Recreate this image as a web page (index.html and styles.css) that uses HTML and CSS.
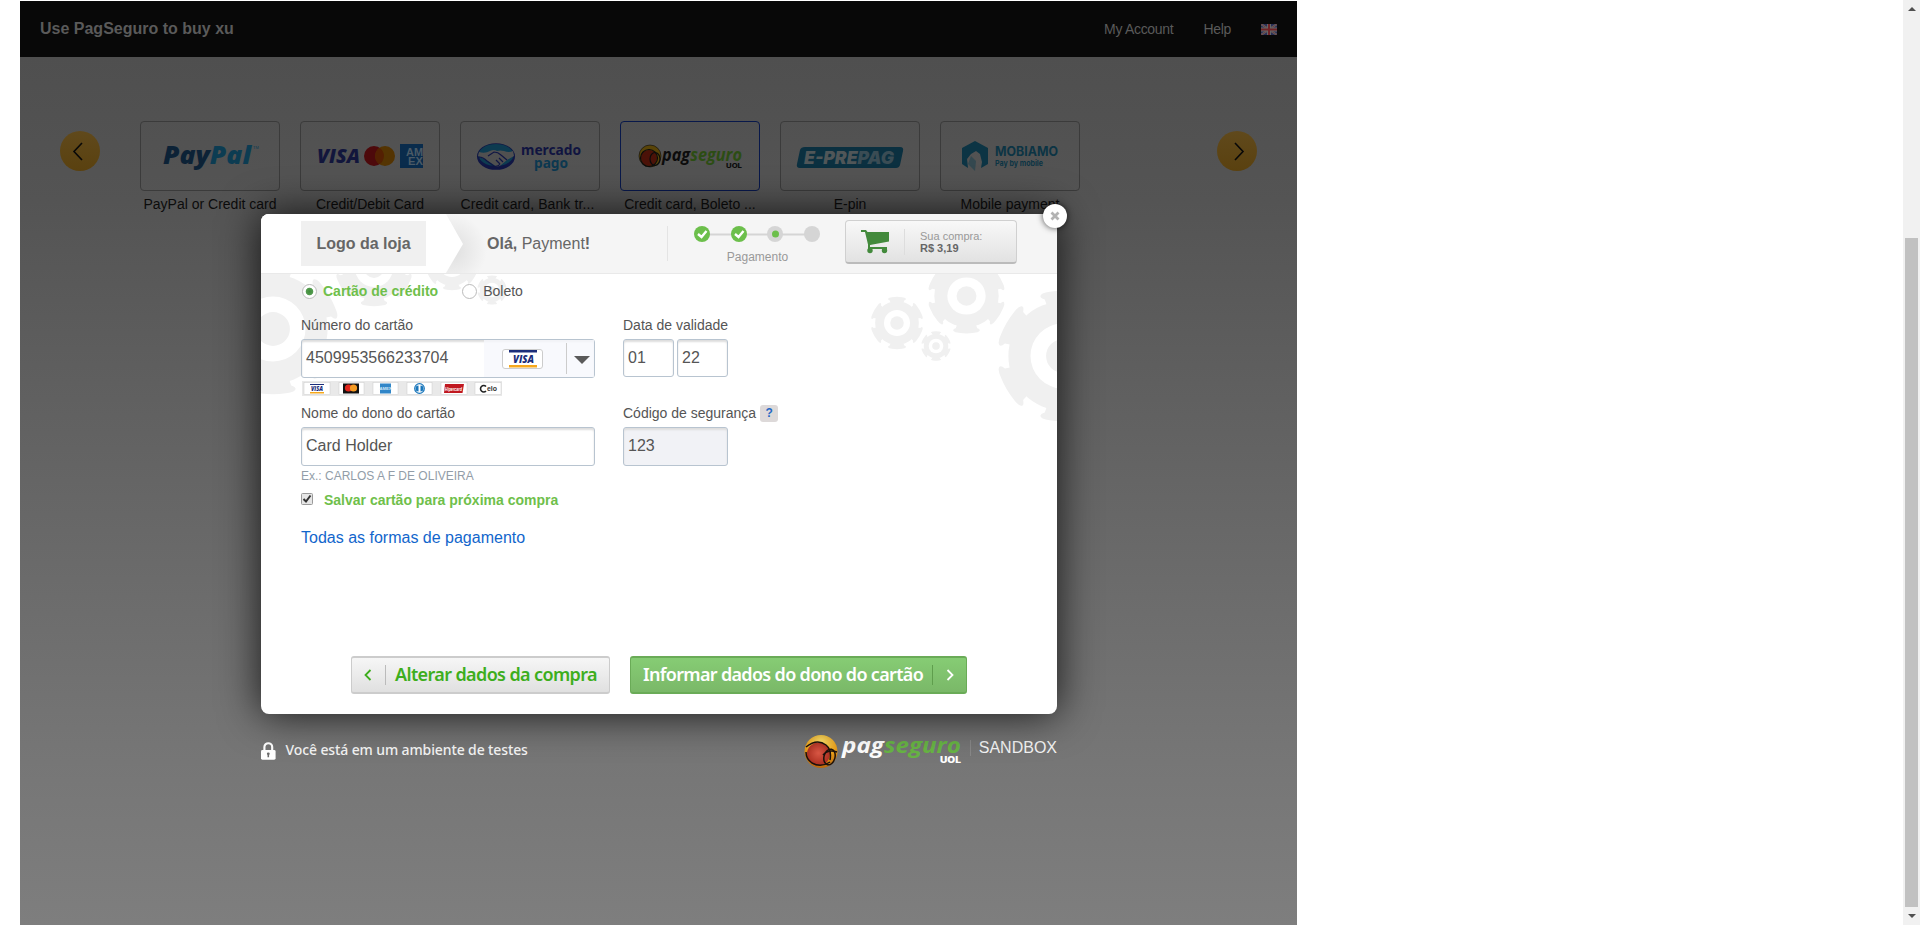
FILE: index.html
```html
<!DOCTYPE html>
<html lang="pt-BR">
<head>
<meta charset="utf-8">
<title>PagSeguro</title>
<link rel="stylesheet" href="styles.css">
</head>
<body>
<svg class="defs" width="0" height="0" aria-hidden="true">
  <defs>
    <path id="tooth" d="M-25-78L-28-87Q-37-90-34-94Q-31-98-20-99Q0-102 20-99Q31-98 34-94Q37-90 28-87L25-78Z"/>
    <g id="gear">
      <circle r="84" fill="#f0f0f0"/>
      <g fill="#f0f0f0">
        <use href="#tooth"/><use href="#tooth" transform="rotate(60)"/><use href="#tooth" transform="rotate(120)"/>
        <use href="#tooth" transform="rotate(180)"/><use href="#tooth" transform="rotate(240)"/><use href="#tooth" transform="rotate(300)"/>
      </g>
      <circle r="50" fill="#fff"/>
      <circle r="26" fill="#f0f0f0"/>
    </g>
    <radialGradient id="gold" cx=".5" cy=".2" r=".8"><stop offset="0" stop-color="#ffe36a"/><stop offset=".6" stop-color="#eda21c"/><stop offset="1" stop-color="#b8660c"/></radialGradient>
    <radialGradient id="red" cx=".5" cy=".45" r=".6"><stop offset="0" stop-color="#dc5845"/><stop offset="1" stop-color="#a52a1c"/></radialGradient>
  </defs>
</svg>
<main class="stage">
  <header class="topbar">
    <h1 class="topbar-title">Use PagSeguro to buy xu</h1>
    <nav class="topbar-nav">
      <span>My Account</span><span>Help</span>
      <svg class="flag" viewBox="0 0 16 11"><rect width="16" height="11" fill="#282d55"/><path d="M0 0L16 11M16 0L0 11" stroke="#666" stroke-width="2"/><path d="M0 0L16 11M16 0L0 11" stroke="#6a3438" stroke-width=".8"/><path d="M8 0V11M0 5.500H16" stroke="#666" stroke-width="4"/><path d="M8 0V11M0 5.500H16" stroke="#702226" stroke-width="2"/></svg>
    </nav>
  </header>

  <section class="carousel">
    <div class="arrow"><svg viewBox="0 0 40 40"><path d="M22 12L14 20.500L22 29"/></svg></div>
    <ul class="methods">
      <li class="method"><div class="tile"><svg viewBox="0 0 140 70">
        <text x="23" y="43" textLength="88" lengthAdjust="spacingAndGlyphs" font-family="Open Sans" font-weight="800" font-style="italic" font-size="25" fill="#0c2236">Pay<tspan fill="#0c3c52">Pal</tspan></text>
        <text x="113" y="28" font-family="Liberation Sans" font-size="4" fill="#0c3c52">TM</text></svg></div><p>PayPal or Credit card</p></li>
      <li class="method"><div class="tile"><svg viewBox="0 0 140 70">
        <text x="17" y="42" font-family="Open Sans" font-weight="800" font-style="italic" font-size="19" textLength="43" lengthAdjust="spacingAndGlyphs" fill="#12163c">VISA</text>
        <circle cx="74" cy="35" r="10" fill="#4d090b"/><circle cx="85" cy="35" r="10" fill="#543402"/><path d="M79.500 26.700a10 10 0 0 1 0 16.600a10 10 0 0 1 0-16.600" fill="#542002"/>
        <rect x="100" y="23" width="23" height="24" fill="#0a2c4c"/><g font-family="Liberation Sans" font-weight="700" font-size="10" fill="#4a5a66"><text x="106" y="34.500" textLength="17" lengthAdjust="spacingAndGlyphs">AM</text><text x="108" y="44" textLength="15" lengthAdjust="spacingAndGlyphs">EX</text></g></svg></div><p>Credit/Debit Card</p></li>
      <li class="method"><div class="tile"><svg viewBox="0 0 140 70">
        <ellipse cx="36" cy="35.500" rx="19" ry="13.300" fill="#101644"/><ellipse cx="36" cy="34" rx="17.500" ry="11" fill="#0d3b50"/>
        <path d="M19 31q6 2 11-1q4-2 7 0q3-1 7 0q5 2 9 0l1 5-7 4-6 5q-4 3-7 0l-8-5-8-4z" fill="#505050"/><path d="M19 36q4 0 8 4l7 5q4 1 6-2M28 35l6-4q4 0 7 3l6 5M36 39l4 4M39 37l4 4" fill="none" stroke="#101644" stroke-width="1.200"/>
        <g font-family="Noto Sans" font-weight="700" font-size="14.500"><text x="61" y="34" textLength="60" lengthAdjust="spacingAndGlyphs" fill="#101440">mercado</text><text x="74" y="46.500" textLength="34" lengthAdjust="spacingAndGlyphs" fill="#0c3850">pago</text></g></svg></div><p class="tight">Credit card, Bank tr...</p></li>
      <li class="method"><div class="tile selected"><svg viewBox="0 0 140 70">
        <circle cx="30" cy="35" r="11" fill="#594408"/><circle cx="29" cy="37" r="8" fill="#4b1208"/><g fill="none" stroke="#0c0c0c" stroke-width="1.200"><circle cx="29" cy="37" r="8.500"/><ellipse cx="35" cy="38" rx="5" ry="6.500"/><circle cx="30" cy="35" r="11" stroke-width=".6"/></g>
        <text x="42" y="40" textLength="80" lengthAdjust="spacingAndGlyphs" font-family="Open Sans" font-weight="700" font-style="italic" font-size="17" fill="#0c0c0c">pag<tspan fill="#2c4d14">seguro</tspan></text>
        <text x="106" y="47" font-family="Inter" font-weight="800" font-size="6.500" textLength="16" lengthAdjust="spacingAndGlyphs" fill="#0c0c0c">UOL</text></svg></div><p>Credit card, Boleto ...</p></li>
      <li class="method"><div class="tile"><svg viewBox="0 0 140 70">
        <path d="M25 26H120q4 0 3 4l-3 14q-1 3-4 3H20q-4 0-3-4l3-14q1-3 5-3z" fill="#0b3040"/>
        <text x="24" y="43" textLength="90" lengthAdjust="spacingAndGlyphs" font-family="Inter" font-weight="900" font-style="italic" font-size="17.500" fill="#505658">E-PRE<tspan fill="#3a4c54">PAG</tspan></text></svg></div><p>E-pin</p></li>
      <li class="method"><div class="tile"><svg viewBox="0 0 140 70">
        <path d="M35 20L48 27V43L41 47L42 41L40 33L36 30L31 33L27 38L28 47L22 43V27Z" fill="#0c3444"/><path d="M28 43l3-8 5 5-1 10z" fill="#34484f"/>
        <g font-family="Inter" font-weight="700" fill="#0c3444"><text x="55" y="35" font-size="12.500" textLength="63" lengthAdjust="spacingAndGlyphs">MOBIAMO</text><text x="55" y="44.500" font-size="8" textLength="48" lengthAdjust="spacingAndGlyphs">Pay by mobile</text></g></svg></div><p>Mobile payment</p></li>
    </ul>
    <div class="arrow"><svg viewBox="0 0 40 40"><path d="M18 12L26 20.500L18 29"/></svg></div>
  </section>

  <div class="lightbox">
    <section class="modal">
      <svg class="gears" width="796" height="441" viewBox="261 273 796 441">
        <use href="#gear" transform="translate(273 329) scale(.65)"/><use href="#gear" transform="translate(374 268) scale(.38)"/><use href="#gear" transform="translate(452 264) scale(.26)"/><use href="#gear" transform="translate(492 290) scale(.145)"/>
        <use href="#gear" transform="translate(897 323) scale(.26)"/><use href="#gear" transform="translate(966.500 296) scale(.383 .372)"/><use href="#gear" transform="translate(936 346) scale(.146)"/><use href="#gear" transform="translate(1063 356) scale(.65)"/>
      </svg>
      <header class="modal-head">
        <svg class="wedge" width="300" height="59" viewBox="0 0 300 59"><defs><radialGradient id="fade" gradientUnits="userSpaceOnUse" cx="190" cy="36" r="36"><stop offset="0" stop-color="#dedede"/><stop offset="1" stop-color="#f5f5f5"/></radialGradient></defs><path d="M185 0H300V59H185Z" fill="url(#fade)"/><path d="M0 0H185L202 30L185 59H0Z" fill="#fff"/></svg>
        <div class="store">Logo da loja</div>
        <div class="hello"><b>Olá,</b> Payment<b>!</b></div>
        <div class="progress">
          <svg width="126" height="16" viewBox="0 0 126 16"><path d="M8 8.500H118" stroke="#d5d5d5" stroke-width="2"/><circle cx="8" cy="8" r="8" fill="#6cbf4b"/><circle cx="45" cy="8" r="8" fill="#6cbf4b"/><circle cx="81" cy="8" r="8" fill="#d5d5d5"/><circle cx="118" cy="8" r="8" fill="#d5d5d5"/><circle cx="81.500" cy="8" r="3.500" fill="#6cbf4b"/><path d="M4 8L7.500 11L12.500 5M41 8L44.500 11L49.500 5" fill="none" stroke="#fff" stroke-width="2.400"/></svg>
          <span>Pagamento</span>
        </div>
        <div class="cart">
          <svg width="28" height="25" viewBox="0 0 28 25" fill="#438a3c"><path d="M0 1H5L6.500 3H28V12.500L9 16V18H26V20H7V15.500L4 3H0Z"/><circle cx="9" cy="21.500" r="2.700"/><circle cx="23.500" cy="21.500" r="2.700"/></svg>
          <p>Sua compra:<br><b>R$ 3,19</b></p>
        </div>
      </header>

      <form class="form">
        <div class="types">
          <i class="radio on"></i><strong>Cartão de crédito</strong><i class="radio second"></i><span>Boleto</span>
        </div>
        <div class="row">
          <div class="col wide">
            <label>Número do cartão</label>
            <div class="input number"><span>4509953566233704</span>
              <div class="brand">
                <svg class="visa" width="41" height="20" viewBox="0 0 41 20"><rect x=".5" y=".5" width="40" height="19" rx="2.500" fill="#fff" stroke="#ccc"/><path d="M7 1H35V3.500H7Z" fill="#1b2d7a"/><path d="M7 16H35V18.500H7Z" fill="#f6a81c"/><text x="11" y="13.500" font-family="Open Sans" font-weight="800" font-style="italic" font-size="11" textLength="21" lengthAdjust="spacingAndGlyphs" fill="#1b2d7a">VISA</text></svg>
                <i class="caret"></i>
              </div>
            </div>
            <svg class="flags" width="200" height="15" viewBox="0 0 200 15"><rect width="200" height="15" fill="#e9e9e9"/>
              <g fill="#fff" stroke="#ccc" stroke-width=".5"><rect x="2" y="1.500" width="26" height="12"/><rect x="37" y="1.500" width="25" height="12"/><rect x="71" y="1.500" width="25" height="12"/><rect x="105" y="1.500" width="25" height="12"/><rect x="139" y="1.500" width="26" height="12"/><rect x="173" y="1.500" width="26" height="12"/></g>
              <path d="M8 3H22V4H8Z" fill="#1b2d7a"/><path d="M8 11H22V12.500H8Z" fill="#f6a81c"/><text x="9" y="10" font-family="Open Sans" font-weight="800" font-style="italic" font-size="6.500" textLength="12" lengthAdjust="spacingAndGlyphs" fill="#1b2d7a">VISA</text>
              <rect x="41" y="2.500" width="16" height="10" fill="#111"/><circle cx="46.500" cy="7" r="3.600" fill="#e1251b"/><circle cx="51.500" cy="7" r="3.600" fill="#f59a22"/>
              <rect x="78" y="2.500" width="11" height="10" fill="#3186c8"/><text x="77.500" y="9" font-family="Liberation Sans" font-weight="700" font-size="4" fill="#d4e8f6" textLength="12" lengthAdjust="spacingAndGlyphs">AMEX</text>
              <circle cx="117.500" cy="7.500" r="4.800" fill="#fff" stroke="#1976bb" stroke-width="1.200"/><path d="M116.500 4.500a3 3 0 0 0 0 6zM118.500 4.500a3 3 0 0 1 0 6z" fill="#1976bb"/>
              <path d="M143 3H162L160.500 12H142Z" fill="#c01820"/><text x="143" y="9.500" font-family="Liberation Sans" font-weight="700" font-style="italic" font-size="5" textLength="17" lengthAdjust="spacingAndGlyphs" fill="#fff">Hipercard</text>
              <path d="M184 5.500a3.200 3.200 0 1 0 0 4.500" fill="none" stroke="#222" stroke-width="1.600"/><text x="185" y="10" font-family="Liberation Sans" font-weight="700" font-size="8" textLength="10" lengthAdjust="spacingAndGlyphs" fill="#333">elo</text>
            </svg>
          </div>
          <div class="col">
            <label>Data de validade</label>
            <div class="pair"><div class="input short">01</div><div class="input short">22</div></div>
          </div>
        </div>
        <div class="row second-row">
          <div class="col wide">
            <label>Nome do dono do cartão</label>
            <div class="input">Card Holder</div>
            <small>Ex.: CARLOS A F DE OLIVEIRA</small>
          </div>
          <div class="col">
            <label>Código de segurança <span class="help">?</span></label>
            <div class="input cvv">123</div>
          </div>
        </div>
        <div class="save"><svg width="12" height="12" viewBox="0 0 12 12"><rect x=".5" y=".5" width="11" height="11" rx="1" fill="#e6e6e6" stroke="#9a9a9a"/><path d="M2.500 6L5 8.500L9.500 2.500" fill="none" stroke="#333" stroke-width="2"/></svg><strong>Salvar cartão para próxima compra</strong></div>
        <a class="all">Todas as formas de pagamento</a>
      </form>

      <div class="actions">
        <div class="btn back"><svg width="8" height="12" viewBox="0 0 8 12"><path d="M6.500 1L1.500 6L6.500 11"/></svg><i></i><span>Alterar dados da compra</span></div>
        <div class="btn next"><span>Informar dados do dono do cartão</span><i></i><svg width="8" height="12" viewBox="0 0 8 12"><path d="M1.500 1L6.500 6L1.500 11"/></svg></div>
      </div>
      <div class="close"><svg width="10" height="10" viewBox="0 0 10 10"><path d="M1.500 1.500L8.500 8.500M8.500 1.500L1.500 8.500" stroke="#b3b3b3" stroke-width="2.800"/></svg></div>
    </section>

    <footer class="foot">
      <svg class="lock" width="15" height="18" viewBox="0 0 15 18"><path d="M3.500 9V5a4 4 0 0 1 8 0V9" fill="none" stroke="#fff" stroke-width="2.200"/><rect y="8" width="15" height="10" rx="1.500" fill="#fff"/><path d="M6 12a1.500 1.500 0 1 1 3 0L8.300 13V15.500H6.700V13Z" fill="#6c6c6c"/></svg>
      <span class="test">Você está em um ambiente de testes</span>
      <svg class="brandmark" width="158" height="42" viewBox="0 -6 158 42">
        <circle cx="17" cy="17.500" r="16.500" fill="url(#gold)"/><circle cx="14.500" cy="20" r="11.500" fill="url(#red)"/>
        <g fill="none" stroke="#1b120c" stroke-width="1.500"><path d="M2 13Q13 4 22 11Q28 16 26 26M26 28Q17 34 8 29Q2 25 2 18"/><ellipse cx="25.500" cy="23" rx="5.500" ry="8" transform="rotate(15 25.500 23)"/><path d="M19 21Q24 15 33 18"/></g>
        <text x="38" y="19" textLength="119" lengthAdjust="spacingAndGlyphs" font-family="Open Sans" font-weight="700" font-style="italic" font-size="22" fill="#fff">pag<tspan fill="#68b544">seguro</tspan></text>
        <text x="136" y="29" font-family="Inter" font-weight="900" font-size="8.500" textLength="21" lengthAdjust="spacingAndGlyphs" fill="#fff">UOL</text>
      </svg>
      <span class="sandbox">SANDBOX</span>
    </footer>
  </div>
</main>
<aside class="scroll"><i class="up"></i><div class="thumb"></div><i class="down"></i></aside>
</body>
</html>
```
FILE: styles.css
```css
* { box-sizing: border-box; }
body {
  margin: 0;
  height: 925px;
  display: flex;
  justify-content: space-between;
  overflow: hidden;
  background: #fff;
  font-family: "Liberation Sans", Arial, sans-serif;
}
.defs { position: absolute; }
h1, p, ul { margin: 0; padding: 0; }

.stage {
  position: relative;
  width: 1277px;
  height: 924px;
  margin: 1px 0 0 20px;
  overflow: hidden;
  background: linear-gradient(#4e4e4e 0, #4f4f4f 56px, #545454 200px, #767676 760px, #7e7e7e 924px);
}
.topbar {
  height: 56px;
  padding: 0 20px;
  display: flex;
  align-items: center;
  justify-content: space-between;
  background: #080808;
  color: #5a5a5a;
}
.topbar-title { font-size: 16px; letter-spacing: 0; }
.topbar-nav { display: flex; align-items: center; font-size: 14px; letter-spacing: -.3px; }
.topbar-nav span { margin-right: 30px; }
.flag { width: 16px; height: 11px; }

.carousel { display: flex; padding: 64px 40px 0; }
.arrow {
  width: 40px;
  height: 40px;
  margin-top: 10px;
  border-radius: 50%;
  background: linear-gradient(#60491c, #5a410f);
}
.arrow path { fill: none; stroke: #080808; stroke-width: 1.6; }
.methods { display: flex; gap: 20px; margin: 0 137px 0 40px; list-style: none; }
.method { width: 140px; text-align: center; font-size: 14px; line-height: 16px; color: #0c0c0c; white-space: nowrap; }
.tight { margin-left: -5px; letter-spacing: .1px; }
.tile { height: 70px; margin-bottom: 5px; border: 1px solid #3b3b3b; border-radius: 4px; }
.tile svg { display: block; width: 140px; height: 70px; margin: -1px; }
.tile.selected { border-color: #08184a; }

.lightbox { position: absolute; left: 241px; top: 213px; width: 796px; }
.modal {
  position: relative;
  height: 500px;
  border-radius: 8px;
  background: #fff;
  box-shadow: 0 0 40px rgba(0, 0, 0, .8);
  color: #555;
}
.gears { position: absolute; left: 0; top: 59px; }
.modal-head {
  position: relative;
  display: flex;
  height: 60px;
  border-bottom: 1px solid #e9e9e9;
  border-radius: 8px 8px 0 0;
  background: #f5f5f5;
  overflow: hidden;
}
.wedge { position: absolute; left: 0; top: 0; }
.store {
  position: relative;
  width: 125px;
  height: 45px;
  margin: 7px 0 0 40px;
  background: #f0f0f0;
  color: #666;
  font: bold 16px/45px "Liberation Sans", Arial, sans-serif;
  text-align: center;
}
.hello { position: relative; margin: 21px 0 0 61px; width: 180px; color: #666; font-size: 16px; line-height: 18px; }
.progress {
  display: flex;
  flex-direction: column;
  align-items: center;
  height: 35px;
  margin-top: 12px;
  padding: 0 25px 0 26px;
  border-left: 1px solid #e4e4e4;
  font-size: 12px;
  line-height: 14px;
  color: #999;
}
.progress span { margin: 8px 0 0 1px; }
.progress svg { flex: none; }
.cart {
  display: flex;
  width: 172px;
  height: 44px;
  margin-top: 6px;
  padding: 8px 0 0 15px;
  border: 1px solid #d0d0d0;
  border-bottom: 2px solid #bbb;
  border-radius: 4px;
  background: linear-gradient(#f8f8f8, #e2e2e2);
}
.cart p {
  height: 26px;
  margin-left: 15px;
  padding: 1px 0 0 15px;
  border-left: 1px solid #ddd;
  font-size: 11px;
  line-height: 12px;
  color: #999;
}
.cart b { color: #666; font-size: 11px; }

.form { position: relative; padding: 9px 0 0 40px; }
.types { display: flex; align-items: center; height: 16px; margin-bottom: 1px; font-size: 14px; }
.types strong, .save strong { color: #6fbf4b; font-size: 14px; }
.radio { width: 15px; height: 15px; margin: 0 6px 0 1px; border: 1px solid #bbb; border-radius: 50%; background: #fff; }
.radio.second { margin-left: 24px; }
.radio.on { background: radial-gradient(circle, #3f8e3a 0, #559b50 3.4px, #fff 4.2px); }
.row { display: flex; gap: 28px; height: 86px; padding-top: 14px; }
.second-row { height: 105px; padding-top: 16px; }
.wide { width: 294px; }
.row label { display: flex; align-items: center; height: 18px; margin: 2px 0 5px; font-size: 14px; }
.input {
  height: 39px;
  padding: 0 4px;
  border: 1px solid #b8c4d0;
  border-radius: 3px;
  background: #fff;
  box-shadow: inset 0 2px 2px #ddd;
  font-size: 16px;
  line-height: 36px;
}
.number { display: flex; justify-content: space-between; padding-right: 0; }
.brand { display: flex; align-items: center; width: 110px; padding-left: 18px; background: rgba(246, 248, 252, .8); }
.visa { flex: none; }
.caret { display: flex; align-items: center; flex: none; margin-left: 23px; width: 28px; height: 31px; border-left: 1px solid #ccc; }
.caret::after { content: ""; margin: 3px 0 0 7px; border: 8px solid transparent; border-top-color: #5a5a5a; border-bottom: 0; }
.flags { display: block; margin: 3px 0 0 1px; }
.pair { display: flex; gap: 3px; }
.short { width: 51px; height: 38px; }
.cvv { width: 105px; background: #f1f2f6; }
.col small { display: block; margin-top: 3px; font-size: 12px; line-height: 14px; color: #929da8; }
.help {
  margin-left: 4px;
  width: 18px;
  height: 17px;
  border-radius: 3px;
  background: #ddd9d9;
  color: #2468c4;
  font: bold 12px/16px "Liberation Sans", Arial, sans-serif;
  text-align: center;
}
.save { display: flex; align-items: center; gap: 11px; height: 18px; }
.save svg { margin-top: -3px; }
.all { display: block; margin-top: 19px; color: #1266cc; font-size: 16px; line-height: 20px; }

.actions { position: absolute; left: 90px; bottom: 20px; display: flex; gap: 20px; }
.btn {
  display: flex;
  align-items: center;
  height: 38px;
  border-radius: 3px;
  font: 600 18px/32px "Noto Sans", sans-serif;
  white-space: nowrap;
}
.btn i { width: 1px; height: 20px; }
.btn path { fill: none; stroke-width: 1.8; }
.btn svg { flex: none; }
.btn span { padding-bottom: 2px; }
.back { width: 259px; padding-left: 12px; border: 1px solid #ccc; border-width: 2px 1px; background: linear-gradient(#f6f6f6, #e0e0e0); color: #3dae1d; letter-spacing: -.63px; }
.back path { stroke: #3dae1d; }
.back i { margin: 0 9px 0 13px; background: #bbb; }
.next { width: 337px; padding-left: 12px; border: 1px solid #6aab57; border-width: 2px 1px; background: linear-gradient(#86cc74, #7ab868); color: #fff; letter-spacing: -.68px; }
.next path { stroke: #fff; }
.next i { margin: 0 13px 0 9px; background: #5f9e4d; }
.close {
  position: absolute;
  right: -10px;
  top: -10px;
  display: grid;
  place-items: center;
  width: 24px;
  height: 24px;
  border-radius: 50%;
  background: #fff;
  box-shadow: 0 0 6px rgba(0, 0, 0, .7);
}

.foot { display: flex; align-items: flex-start; padding-top: 14px; color: #f4f4f4; }
.lock { margin-top: 14px; }
.test { width: 256px; margin: 12px 270px 0 10px; font: 500 14px/20px "Noto Sans", sans-serif; letter-spacing: -.12px; white-space: nowrap; }
.brandmark { flex: none; margin-left: -1px; }
.sandbox { margin: 12px 0 0 8px; padding-left: 8px; font-size: 16px; line-height: 16px; border-left: 1px solid #888; }

.scroll { display: flex; flex-direction: column; align-items: center; width: 17px; height: 925px; background: #f1f1f1; }
.thumb { width: 13px; height: 669px; background: #c1c1c1; }
.up, .down { border: 4px solid transparent; }
.up { margin: 7px 0 227px; border-top: 0; border-bottom-color: #505050; }
.down { margin-top: 7px; border-bottom: 0; border-top-color: #505050; }
```
